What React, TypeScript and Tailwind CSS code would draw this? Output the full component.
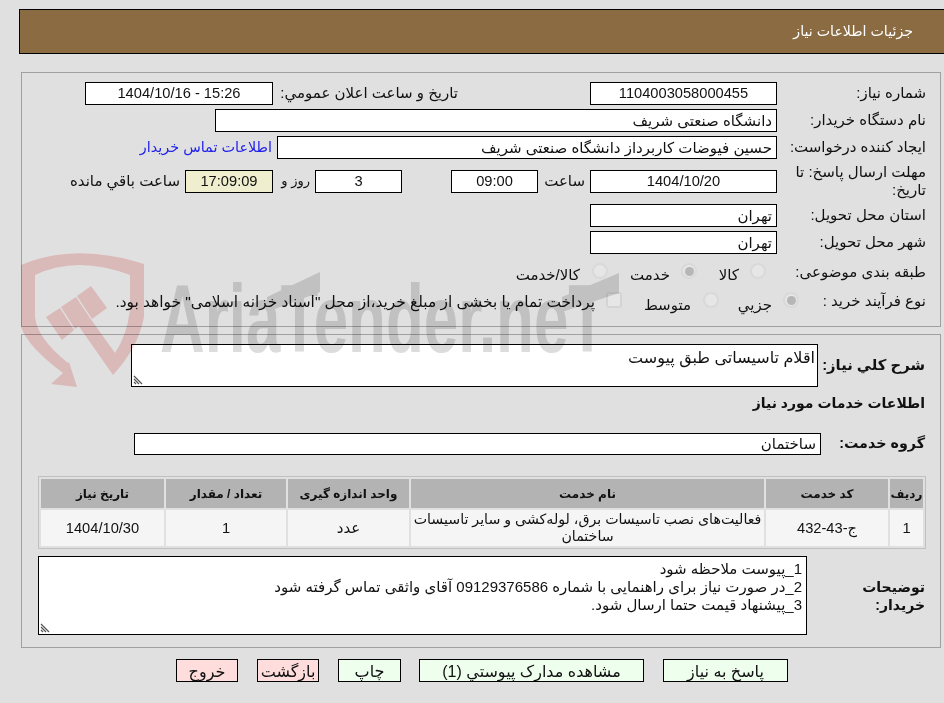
const box = 'border border-black bg-white h-[23px] leading-[21px]';
const digits = 'text-[14.67px]';

function Radio({ checked }: { checked?: boolean }) {
  return (
    <span className="w-[16px] h-[16px] mb-[2px] shrink-0 rounded-full border-2 border-[#d9d9d9] bg-[#e6e6e6] flex items-center justify-center">
      {checked && <span className="w-[9px] h-[9px] rounded-full bg-[#b6b6b6]" />}
    </span>
  );
}

function Row({ label, className, children }: { label: string; className: string; children: React.ReactNode }) {
  return (
    <div className={`flex items-center ${className}`}>
      <div className="w-[149px] shrink-0">{label}</div>
      <div className="flex items-center flex-1 min-w-0">{children}</div>
    </div>
  );
}

function Grip() {
  return (
    <svg width="10" height="10" viewBox="0 0 10 10" className="absolute left-[1px] bottom-[1px]">
      <path d="M1 1 L9 9 M1 4 L6 9 M1 7 L3 9" stroke="#555" strokeWidth="1.2" fill="none" />
    </svg>
  );
}

// watermark sits over the page and darkens what is under it, text stays readable
function Watermark() {
  return (
    <div className="absolute left-[20px] top-[250px] w-[600px] h-[150px] z-10 pointer-events-none mix-blend-multiply" dir="ltr">
      <span className="absolute left-[140px] top-[14px] text-[#dcdcdc] font-bold text-[96px] leading-[110px] whitespace-nowrap origin-left scale-x-[0.645] font-['Liberation_Sans',sans-serif]">
        AriaTender.neT
      </span>
      <svg width="600" height="150" viewBox="0 0 600 150" className="absolute left-0 top-0">
        <path d="M1 15 Q55 -8 124 14 V67 Q118 98 93 125 L58 75 L70 68 L95 103 Q107 85 110 60 V25 Q57 5 15 25 V67 Q17 88 48 113 L49 112 L57 137 L31 134 L43 123 Q8 97 1 77 Z" fill="#f9d3d3" />
        <path d="M26 67 L40 58 L54 80 L42 90 Z M41 57 L56 47 L70 68 L55 79 Z M57 46 L71 36 L87 58 L72 69 Z" fill="#f9d3d3" />
        <path d="M247 47 L300 22 V42 L247 62 Z M542 47 L599 23 V43 L542 62 Z" fill="#dcdcdc" />
      </svg>
    </div>
  );
}

export default function App() {
  return (
    <div dir="rtl" className="relative h-[703px] w-[944px] overflow-hidden bg-[#e0e0e0] text-[15px] text-[#111] font-['Liberation_Sans','DejaVu_Sans',sans-serif]">
      <div className="pt-[9px]">
        {/* header */}
        <div className="ml-[19px] h-[45px] bg-[#8b6b42] border-y border-l border-black flex items-center pr-[31px] text-white text-[14.2px]">
          جزئیات اطلاعات نیاز
        </div>

        <div className="mt-[18px] ml-[21px] mr-[3px] h-[255px] border border-[#a0a0a0] pt-[9px] pr-[14px]">
          <div className="flex items-center">
            <div className="w-[149px] shrink-0">شماره نیاز:</div>
            <div className={`${box} ${digits} w-[187px] text-center`}>1104003058000455</div>
            <div className="w-[132px] shrink-0" />
            <div className="w-[185px] shrink-0 whitespace-nowrap">تاریخ و ساعت اعلان عمومي:</div>
            <div dir="ltr" className={`${box} ${digits} w-[188px] text-center`}>1404/10/16 - 15:26</div>
          </div>
          <Row label="نام دستگاه خریدار:" className="mt-[4px]">
            <div className={`${box} w-[562px] pr-1`}>دانشگاه صنعتی شریف</div>
          </Row>
          <Row label="ایجاد کننده درخواست:" className="mt-[4px]">
            <div className={`${box} w-[500px] pr-1`}>حسین فیوضات کاربرداز دانشگاه صنعتی شریف</div>
            <a className="mr-[5px] text-[#2222ee] whitespace-nowrap text-[14.4px]">اطلاعات تماس خریدار</a>
          </Row>
          <Row label="مهلت ارسال پاسخ: تا تاریخ:" className="mt-[3px] h-[38px] leading-[18px]">
            <div className={`${box} ${digits} w-[187px] text-center`}>1404/10/20</div>
            <div className="w-[52px] pr-[5px] whitespace-nowrap">ساعت</div>
            <div className={`${box} ${digits} w-[87px] text-center`}>09:00</div>
            <div className="w-[49px]" />
            <div className={`${box} ${digits} w-[87px] text-center`}>3</div>
            <div className="w-[42px] pr-[5px] whitespace-nowrap text-[13px]">روز و</div>
            <div className={`border border-black h-[23px] leading-[21px] ${digits} w-[88px] text-center bg-[#efefcf]`}>17:09:09</div>
            <div className="pr-[5px] whitespace-nowrap">ساعت باقي مانده</div>
          </Row>
          <Row label="استان محل تحویل:" className="mt-[4px]">
            <div className={`${box} w-[187px] pr-1`}>تهران</div>
          </Row>
          <Row label="شهر محل تحویل:" className="mt-[4px]">
            <div className={`${box} w-[187px] pr-1`}>تهران</div>
          </Row>
          <Row label="طبقه بندی موضوعی:" className="mt-[7px] h-[22px]">
            <div className="w-[11px] shrink-0" />
            <Radio />
            <span className="w-[53px] pr-[11px] pt-[6px]">کالا</span>
            <Radio checked />
            <span className="w-[73px] pr-[11px] pt-[6px]">خدمت</span>
            <Radio />
            <span className="pr-[12px] pt-[6px] whitespace-nowrap">کالا/خدمت</span>
          </Row>
          <div className="mt-[7px] h-[22px] flex items-center">
            <div className="w-[127px] shrink-0">نوع فرآیند خرید :</div>
            <Radio checked />
            <span className="w-[64px] pr-[11px] pt-[8px]">جزيي</span>
            <Radio />
            <span className="w-[81px] pr-[12px] pt-[8px]">متوسط</span>
            <span className="w-[16px] h-[16px] mb-[2px] shrink-0 rounded-[3px] border-2 border-[#d4d4d4] bg-[#e6e6e6]" />
            <span className="pr-[11px] pt-[2px] whitespace-nowrap text-[15.4px]">پرداخت تمام یا بخشی از مبلغ خرید،از محل "اسناد خزانه اسلامی" خواهد بود.</span>
          </div>
        </div>

        <div className="mt-[7px] ml-[21px] mr-[3px] h-[314px] border border-[#a0a0a0] pt-[9px] pr-[15px] pl-[12px]">
          <div className="flex items-center">
            <div className="w-[107px] shrink-0 font-bold text-[14.8px] whitespace-nowrap">شرح کلي نیاز:</div>
            <div className="relative w-[687px] h-[43px] border border-black bg-white pr-0.5 leading-[26px] text-[16px]">
              اقلام تاسیساتی طبق پیوست
              <Grip />
            </div>
          </div>
          <div className="mt-[6px] font-bold text-[14px] leading-[20px]">اطلاعات خدمات مورد نیاز</div>
          <div className="mt-[20px] flex items-center">
            <div className="w-[104px] shrink-0 font-bold text-[14.3px] whitespace-nowrap">گروه خدمت:</div>
            <div className="border border-black bg-white w-[687px] h-[22px] leading-[20px] pr-1">ساختمان</div>
          </div>

          <table className="mt-[21px] w-[888px] border border-[#c0c0c0] border-separate border-spacing-[2px] text-center table-fixed mr-[-1px]">
            <thead>
              <tr className="h-[29px] bg-[#b3b3b3] font-bold text-[12px]">
                <th className="w-[33px] p-0">ردیف</th>
                <th className="w-[122px]">کد خدمت</th>
                <th className="w-[353px]">نام خدمت</th>
                <th className="w-[121px]">واحد اندازه گیری</th>
                <th className="w-[120px]">تعداد / مقدار</th>
                <th className="w-[123px]">تاریخ نیاز</th>
              </tr>
            </thead>
            <tbody>
              <tr className="h-[36px] bg-[#f5f5f5]">
                <td className={digits}>1</td>
                <td className={digits}>ج-43-432</td>
                <td className="leading-[17px] text-[14.2px]">فعالیت‌های نصب تاسیسات برق، لوله‌کشی و سایر تاسیسات ساختمان</td>
                <td>عدد</td>
                <td className={digits}>1</td>
                <td className={digits}>1404/10/30</td>
              </tr>
            </tbody>
          </table>

          <div className="mt-[7px] flex items-center">
            <div className="w-[118px] shrink-0 pl-[40px] font-bold text-[14px] leading-[18px]">توضیحات خریدار:</div>
            <div className="relative w-[769px] h-[79px] border border-black bg-white pr-1 pt-[3px] leading-[18px]">
              <div>1_پیوست ملاحظه شود</div>
              <div>2_در صورت نیاز برای راهنمایی با شماره 09129376586 آقای واثقی تماس گرفته شود</div>
              <div>3_پیشنهاد قیمت حتما ارسال شود.</div>
              <Grip />
            </div>
          </div>
        </div>

        <div className="mt-[11px] mr-[156px] flex items-center text-[16px]">
          <button className="w-[125px] h-[23px] border border-black bg-[#eeffee]">پاسخ به نیاز</button>
          <button className="mr-[19px] w-[225px] h-[23px] border border-black bg-[#eeffee]">مشاهده مدارک پیوستي (1)</button>
          <button className="mr-[18px] w-[63px] h-[23px] border border-black bg-[#eeffee]">چاپ</button>
          <button className="mr-[19px] w-[62px] h-[23px] border border-black bg-[#ffdddd]">بازگشت</button>
          <button className="mr-[19px] w-[62px] h-[23px] border border-black bg-[#ffdddd]">خروج</button>
        </div>
      </div>
      <Watermark />
    </div>
  );
}
